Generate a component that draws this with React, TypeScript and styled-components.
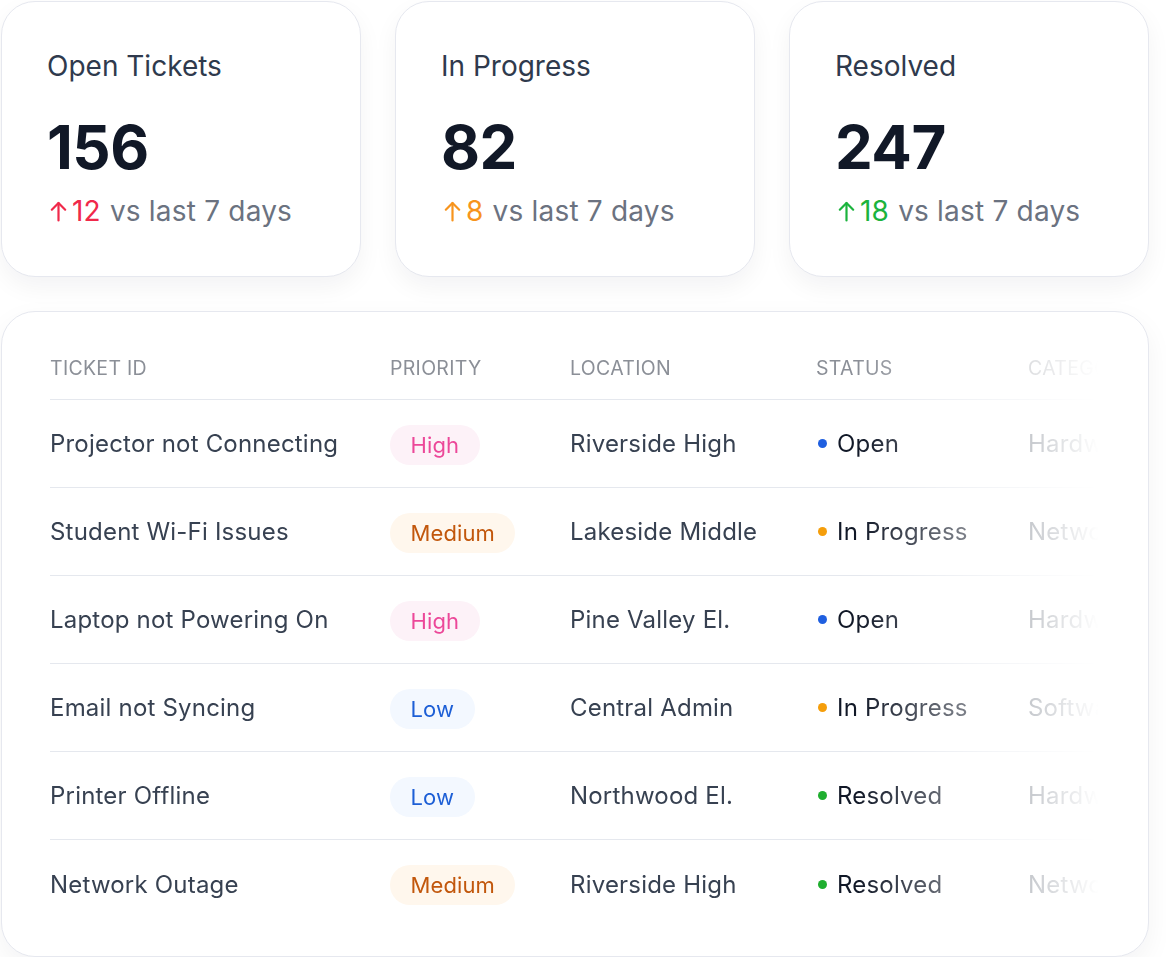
import React from "react";
import styled, { createGlobalStyle } from "styled-components";

const Global = createGlobalStyle`
  html, body { margin: 0; padding: 0; background: #ffffff; }
  body { font-family: Inter, "Noto Sans", Arial, sans-serif; -webkit-font-smoothing: antialiased; }
  * { box-sizing: border-box; }
`;

const Page = styled.div`
  width: 1150px;
  padding: 1px 0 0 1px;
  display: flex;
  flex-direction: column;
  gap: 34px;
`;

const StatsRow = styled.div`
  display: grid;
  grid-template-columns: repeat(3, 360px);
  gap: 34px;
`;

const StatCard = styled.div`
  height: 276px;
  background: #fff;
  border: 1.5px solid #e6e8ef;
  border-radius: 34px;
  box-shadow: 0 10px 24px rgba(17, 24, 39, 0.05);
  padding: 45px 44px 0 45px;
  display: flex;
  flex-direction: column;
`;

const StatTitle = styled.div`
  font-size: 28px;
  line-height: 38px;
  color: #2f3a4d;
  font-weight: 400;
`;

const StatValue = styled.div`
  font-size: 60px;
  line-height: 72px;
  font-weight: 700;
  color: #111827;
  letter-spacing: -0.5px;
  margin-top: 26px;
`;

const StatDelta = styled.div`
  display: flex;
  align-items: center;
  font-size: 28px;
  line-height: 36px;
  letter-spacing: 0.2px;
  color: #6b7280;
  margin-top: 10px;
`;

const DeltaValue = styled.span<{ $c: string }>`
  display: inline-flex;
  align-items: center;
  color: ${(p) => p.$c};
  margin-right: 9px;
  svg { margin: 0 5px 0 3px; }
`;

const TableCard = styled.div`
  width: 1148px;
  height: 646px;
  background: #fff;
  border: 1.5px solid #e6e8ef;
  border-radius: 34px;
  box-shadow: 0 10px 28px rgba(17, 24, 39, 0.05);
  padding: 24px 48px 28px 48px;
`;

const Scroller = styled.div`
  overflow: hidden;
  width: 1048px;
  -webkit-mask-image: linear-gradient(to right, #000 0%, #000 77%, transparent 100%);
  mask-image: linear-gradient(to right, #000 0%, #000 77%, transparent 100%);
`;

const Grid = styled.div`
  width: 1200px;
  display: grid;
  grid-template-columns: 340px 180px 246px 212px 222px;
`;

const HeadCell = styled.div`
  height: 64px;
  display: flex;
  align-items: center;
  font-size: 19.5px;
  color: #8b8f97;
  letter-spacing: 0.3px;
  text-transform: uppercase;
  border-bottom: 1.5px solid #e5e8ee;
`;

const Cell = styled.div<{ $last?: boolean; $tone?: "main" | "strong" }>`
  height: 88px;
  display: flex;
  align-items: center;
  font-size: 24px;
  letter-spacing: 0.2px;
  color: ${(p) => (p.$tone === "strong" ? "#111827" : "#374151")};
  border-bottom: ${(p) => (p.$last ? "none" : "1.5px solid #e5e8ee")};
  white-space: nowrap;
`;

const badgeColors: Record<string, { bg: string; fg: string }> = {
  High: { bg: "#fdf2f8", fg: "#ec4899" },
  Medium: { bg: "#fff7ed", fg: "#c2570c" },
  Low: { bg: "#f3f8ff", fg: "#1d5fd6" },
};

const Badge = styled.span<{ $level: string }>`
  display: inline-flex;
  align-items: center;
  height: 40px;
  padding: 0 20.5px;
  margin-top: 2px;
  border-radius: 999px;
  font-size: 22px;
  letter-spacing: 0.1px;
  background: ${(p) => badgeColors[p.$level].bg};
  color: ${(p) => badgeColors[p.$level].fg};
`;

const statusColors: Record<string, string> = {
  Open: "#1f5fe0",
  "In Progress": "#f59e0b",
  Resolved: "#1fae2f",
};

const Dot = styled.span<{ $status: string }>`
  width: 9px;
  height: 9px;
  border-radius: 50%;
  background: ${(p) => statusColors[p.$status]};
  margin: 0 10px 0 2px;
`;

const UpArrow = () => (
  <svg width="17" height="21" viewBox="0 0 17 21" fill="none" stroke="currentColor" strokeWidth="2.2" strokeLinecap="round" strokeLinejoin="round">
    <path d="M8.5 19.5V2" />
    <path d="M1.8 8.7 8.5 2l6.7 6.7" />
  </svg>
);

const stats = [
  { title: "Open Tickets", value: "156", delta: "12", color: "#f0294a" },
  { title: "In Progress", value: "82", delta: "8", color: "#f7941d" },
  { title: "Resolved", value: "247", delta: "18", color: "#1bb33d" },
];

const rows = [
  ["Projector not Connecting", "High", "Riverside High", "Open", "Hardware"],
  ["Student Wi-Fi Issues", "Medium", "Lakeside Middle", "In Progress", "Network"],
  ["Laptop not Powering On", "High", "Pine Valley El.", "Open", "Hardware"],
  ["Email not Syncing", "Low", "Central Admin", "In Progress", "Software"],
  ["Printer Offline", "Low", "Northwood El.", "Resolved", "Hardware"],
  ["Network Outage", "Medium", "Riverside High", "Resolved", "Network"],
];

export default function App() {
  return (
    <>
      <Global />
      <Page>
        <StatsRow>
          {stats.map((s) => (
            <StatCard key={s.title}>
              <StatTitle>{s.title}</StatTitle>
              <StatValue>{s.value}</StatValue>
              <StatDelta>
                <DeltaValue $c={s.color}>
                  <UpArrow />
                  {s.delta}
                </DeltaValue>
                vs last 7 days
              </StatDelta>
            </StatCard>
          ))}
        </StatsRow>
        <TableCard>
          <Scroller>
            <Grid>
              {["Ticket ID", "Priority", "Location", "Status", "Category"].map((h) => (
                <HeadCell key={h}>{h}</HeadCell>
              ))}
              {rows.map((r, i) => {
                const last = i === rows.length - 1;
                return (
                  <React.Fragment key={r[0]}>
                    <Cell $last={last}>{r[0]}</Cell>
                    <Cell $last={last}>
                      <Badge $level={r[1]}>{r[1]}</Badge>
                    </Cell>
                    <Cell $last={last}>{r[2]}</Cell>
                    <Cell $last={last} $tone="strong">
                      <Dot $status={r[3]} />
                      {r[3]}
                    </Cell>
                    <Cell $last={last}>{r[4]}</Cell>
                  </React.Fragment>
                );
              })}
            </Grid>
          </Scroller>
        </TableCard>
      </Page>
    </>
  );
}
